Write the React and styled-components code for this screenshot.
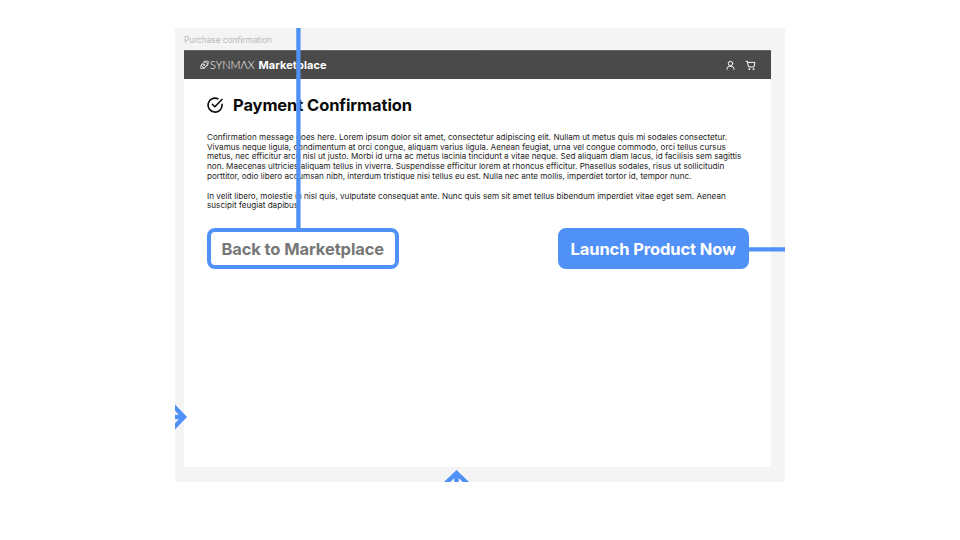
import React from "react";
import styled, { createGlobalStyle } from "styled-components";

const BLUE = "#5091f7";

const GlobalStyle = createGlobalStyle`
  * { box-sizing: border-box; }
  body { margin: 0; background: #fff; font-family: Inter, sans-serif; }
`;

const Page = styled.main`
  width: 960px;
  height: 540px;
  padding: 28px 175px 0;
  background: #fff;
`;

const Canvas = styled.section`
  position: relative;
  width: 610px;
  height: 454px;
  padding: 0 14px 15px 9px;
  display: flex;
  flex-direction: column;
  background: #f4f4f4;
  overflow: hidden;
`;

const FrameLabel = styled.div`
  height: 22px;
  flex: none;
  line-height: 24px;
  font-size: 8.5px;
  letter-spacing: -0.14px;
  color: #bababa;
  white-space: nowrap;
`;

const Frame = styled.article`
  flex: 1;
  display: flex;
  flex-direction: column;
  background: #fff;
`;

const Header = styled.header`
  height: 29px;
  flex: none;
  display: flex;
  align-items: center;
  padding: 0 15px 0 16px;
  border-top: 1px solid #666;
  background: #4a4a4a;
  color: #fff;
`;

const LogoIcon = styled.svg`
  width: 9px;
  height: 10px;
  margin-right: 1px;
`;

const Wordmark = styled.span`
  width: 48.5px;
  font: 300 11px/26px Lato, sans-serif;
  letter-spacing: -0.03px;
  color: #fff;
`;

const Brand = styled.span`
  flex: 1;
  font-size: 11px;
  line-height: 27px;
  font-weight: 700;
  letter-spacing: 0.08px;
`;

const HeaderIcons = styled.nav`
  display: flex;
  gap: 9px;
`;

const StrokeIcon = styled.svg`
  width: ${(p) => p.$size}px;
  height: ${(p) => p.$size}px;
  display: block;
  fill: none;
  stroke: currentColor;
  stroke-linecap: round;
  stroke-linejoin: round;
`;

const Content = styled.div`
  padding: 16px 22px 0 23px;
`;

const TitleRow = styled.div`
  height: 20px;
  display: flex;
  align-items: center;
  gap: 10px;
  color: #0b0b0b;
`;

const Title = styled.h1`
  margin: 0;
  font-size: 16.5px;
  line-height: 20px;
  font-weight: 700;
  letter-spacing: -0.1px;
  white-space: nowrap;
`;

const Message = styled.div`
  height: 113px;
  padding-top: 17.9px;
`;

const Paragraph = styled.p`
  margin: 0 0 9.8px;
  font-size: 8.15px;
  line-height: 9.8px;
  color: #1c1c1c;
  white-space: pre;
`;

const Actions = styled.div`
  display: flex;
  justify-content: space-between;
`;

const Button = styled.button`
  width: 191.5px;
  height: 41px;
  padding: 0;
  border: 4px solid ${BLUE};
  border-radius: 8px;
  background: ${(p) => (p.$primary ? BLUE : "#fff")};
  color: ${(p) => (p.$primary ? "#fff" : "#777")};
  font: 700 16.5px/32px Inter, sans-serif;
  letter-spacing: -0.1px;
  white-space: nowrap;
`;

const Connectors = styled.svg`
  position: absolute;
  inset: 0;
  width: 610px;
  height: 454px;
  fill: none;
  stroke: ${BLUE};
  stroke-width: 4.3;
  pointer-events: none;
`;

export default function App() {
  return (
    <Page>
      <GlobalStyle />
      <Canvas>
        <FrameLabel>Purchase confirmation</FrameLabel>
        <Frame>
          <Header>
            <LogoIcon viewBox="0 0 9 10" fill="none" stroke="#e8e8e8" strokeWidth="0.85">
              <path d="M3.5 1.6 Q5.6 .8 8.3 1.2 Q8.5 4.5 6.7 6.6 M5.5 7.9 Q3.5 8.9 .7 8.5 Q.4 5.6 2 3.5" />
              <ellipse cx="4.5" cy="4.8" rx="3.2" ry="2.2" transform="rotate(-48 4.5 4.8)" />
              <circle cx="4.1" cy="4.9" r=".7" fill="#e8e8e8" />
            </LogoIcon>
            <Wordmark>SYNMΛX</Wordmark>
            <Brand>Marketplace</Brand>
            <HeaderIcons>
              <StrokeIcon $size={11} viewBox="0 0 11 11">
                <circle cx="5.5" cy="3.5" r="2.2" />
                <path d="M2 9.4v-.8Q2.2 6.5 4.4 6.5h2.2Q8.8 6.5 9 8.6v.8" />
              </StrokeIcon>
              <StrokeIcon $size={11} viewBox="0 0 11 11">
                <path d="M1 1.2h1.3l1.2 5.7h5.6l.8-4.5H2.6" />
                <circle cx="4.2" cy="9.1" r=".5" />
                <circle cx="8.4" cy="9.1" r=".5" />
              </StrokeIcon>
            </HeaderIcons>
          </Header>
          <Content>
            <TitleRow>
              <StrokeIcon $size={16} viewBox="0 0 16 16" strokeWidth="1.6">
                <path d="M15.1 7.2V8A7 7 0 1 1 10.9 1.7" />
                <path d="M5.4 7.3 7.8 9.7 15 2.5" />
              </StrokeIcon>
              <Title>Payment Confirmation</Title>
            </TitleRow>
            <Message>
              <Paragraph>
                {`Confirmation message goes here. Lorem ipsum dolor sit amet, consectetur adipiscing elit. Nullam ut metus quis mi sodales consectetur.
Vivamus neque ligula, condimentum at orci congue, aliquam varius ligula. Aenean feugiat, urna vel congue commodo, orci tellus cursus
metus, nec efficitur arcu nisl ut justo. Morbi id urna ac metus lacinia tincidunt a vitae neque. Sed aliquam diam lacus, id facilisis sem sagittis
non. Maecenas ultricies aliquam tellus in viverra. Suspendisse efficitur lorem at rhoncus efficitur. Phasellus sodales, risus ut sollicitudin
porttitor, odio libero accumsan nibh, interdum tristique nisi tellus eu est. Nulla nec ante mollis, imperdiet tortor id, tempor nunc.`}
              </Paragraph>
              <Paragraph>
                {`In velit libero, molestie in nisl quis, vulputate consequat ante. Nunc quis sem sit amet tellus bibendum imperdiet vitae eget sem. Aenean
suscipit feugiat dapibus.`}
              </Paragraph>
            </Message>
            <Actions>
              <Button>Back to Marketplace</Button>
              <Button $primary>Launch Product Now</Button>
            </Actions>
          </Content>
        </Frame>
        <Connectors viewBox="0 0 610 454">
          <path d="M151 21.5H305" stroke="#fff" strokeWidth="1" />
          <path d="M123.4 0V202 M573 221.3H610" />
          <path d="M-2 389H8 M-3 376.5 9 389 -3 401.5" strokeWidth="4.4" />
          <path d="M281.5 460V446 M269 457 281.5 445 294 457" strokeWidth="4.4" />
        </Connectors>
      </Canvas>
    </Page>
  );
}
